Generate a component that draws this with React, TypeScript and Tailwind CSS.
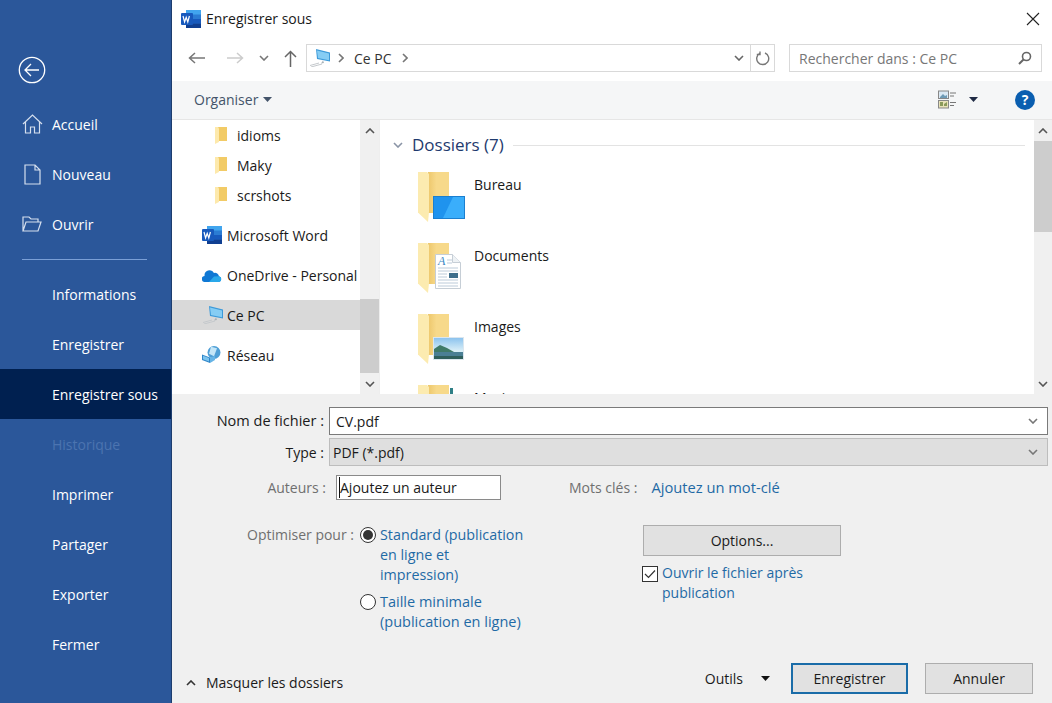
import type { ReactNode } from 'react';

const font = { fontFamily: '"Open Sans", "Noto Sans", sans-serif' };

function WordIcon() {
  return (
    <svg width="20" height="18" viewBox="0 0 20 18" className="shrink-0">
      <rect x="5" y="0" width="15" height="18" rx="1" fill="#2b7cd3" />
      <rect x="5" y="0" width="15" height="4.5" fill="#41a5ee" />
      <rect x="5" y="9" width="15" height="4.5" fill="#185abd" />
      <rect x="5" y="13.5" width="15" height="4.5" fill="#103f91" />
      <rect x="0" y="3" width="12" height="12" rx="1" fill="#185abd" />
      <path d="M2 6l1.600 6 1.600-4.600 1.600 4.600 1.600-6" fill="none" stroke="#fff" strokeWidth="1.2" />
    </svg>
  );
}

function SmallFolder() {
  return (
    <svg width="12" height="17" viewBox="0 0 12 17" className="shrink-0">
      <path d="M3 0h9v14H3z" fill="#f2cb66" />
      <path d="M0 0h3l1 1.500V15l-4 2z" fill="#fde9ac" />
    </svg>
  );
}

function PcIcon() {
  return (
    <svg width="20" height="18" viewBox="0 0 20 18" className="shrink-0">
      <path d="M6 0l14 3.500v9L7 10z" fill="#3d9ad9" />
      <path d="M7 1.400l12 3v6.800L8 9z" fill="#86cdf4" />
      <path d="M13 11.500l1 2.500-3 .5z" fill="#a8b2b9" />
      <path d="M0 16.500l9-2.500M1 18l11-3" stroke="#c4c8cc" strokeWidth="1" />
    </svg>
  );
}

function OneDriveIcon() {
  return (
    <svg width="20" height="13" viewBox="0 0 20 13" className="shrink-0">
      <path d="M3 13a3 3 0 0 1-.4-6A5 5 0 0 1 12 4a4 4 0 0 1 5 3.200 3 3 0 0 1 0 5.800z" fill="#0f78d4" />
      <path d="M7 13l5-5.500 5-.3a3 3 0 0 1 0 5.800z" fill="#29a8ea" />
    </svg>
  );
}

function NetworkIcon() {
  return (
    <svg width="19" height="18" viewBox="0 0 19 18" className="shrink-0">
      <circle cx="12" cy="6.500" r="6.500" fill="#4f9fd6" />
      <path d="M9 .8l6 1.500-3 8-5-2.500z" fill="#c4e6f8" />
      <path d="M0 8.500l8 3v5.500l-8-3z" fill="#2f86c9" />
      <path d="M1 9.800l6 2.300v3.500l-6-2.300z" fill="#7cc4ee" />
      <path d="M8 11.500l5-1.500v4l-5 3z" fill="#66b4e6" />
    </svg>
  );
}

function LargeFolder({ children }: { children?: ReactNode }) {
  return (
    <div className="relative h-[50px] w-[47px] shrink-0">
      <svg width="32" height="50" viewBox="0 0 32 50">
        <defs>
          <linearGradient id="folderBack" x1="0" x2="1" y1="0" y2="0">
            <stop offset="0" stopColor="#edc76b" />
            <stop offset="0.4" stopColor="#f7d98a" />
          </linearGradient>
        </defs>
        <path d="M10 0h21v41H10z" fill="url(#folderBack)" />
        <path d="M0 0h9l2 2v38l-1 10-9-8.500-1-1z" fill="#fcebb0" />
      </svg>
      {children}
    </div>
  );
}

function Chevron({ up, className }: { up?: boolean; className?: string }) {
  return (
    <svg width="10" height="6" viewBox="0 0 10 6" className={className}>
      <path d={up ? 'M1 5l4-4 4 4' : 'M1 1l4 4 4-4'} fill="none" stroke="currentColor" strokeWidth="1.6" />
    </svg>
  );
}

function Caret({ color = '#1f2a44' }: { color?: string }) {
  return (
    <svg width="9" height="5" viewBox="0 0 9 5" className="shrink-0">
      <path d="M0 0h9L4.500 5z" fill={color} />
    </svg>
  );
}

function SideRow({ label, icon, active, muted }: { label: string; icon?: ReactNode; active?: boolean; muted?: boolean }) {
  return (
    <div
      className={`flex h-[50px] items-center text-[14px] ${active ? 'bg-[#002050]' : ''} ${muted ? 'text-[#4c74b0]' : 'text-white'}`}
    >
      <span className="ml-[12px] flex w-[40px] justify-center">{icon}</span>
      {label}
    </div>
  );
}

function TreeRow({ icon, label, iconBox, selected }: { icon: ReactNode; label: string; iconBox: string; selected?: boolean }) {
  return (
    <div className={`flex h-[30px] items-center text-[14px] text-[#1a1a1a] ${selected ? 'bg-[#d9d9d9]' : ''}`}>
      <span className={`flex items-center ${iconBox}`}>{icon}</span>
      <span className="whitespace-nowrap">{label}</span>
    </div>
  );
}

function FolderRow({ label, children }: { label: string; children?: ReactNode }) {
  return (
    <div className="flex h-[71px] shrink-0 pl-[38px]">
      <LargeFolder>{children}</LargeFolder>
      <span className="ml-[9px] mt-[3px] text-[14px] leading-[20px] text-[#1a1a1a]">{label}</span>
    </div>
  );
}

function Scrollbar({ thumbTop, thumbHeight, width }: { thumbTop: string; thumbHeight: string; width: string }) {
  return (
    <div className={`flex shrink-0 flex-col bg-[#f0f0f0] text-[#555] ${width}`}>
      <div className="flex h-[21px] items-center justify-center">
        <Chevron up />
      </div>
      <div className="relative flex-1">
        <div className={`bg-[#cdcdcd] ${thumbTop} ${thumbHeight}`} />
      </div>
      <div className="flex h-[21px] items-center justify-center">
        <Chevron />
      </div>
    </div>
  );
}

function Radio({ checked }: { checked?: boolean }) {
  return (
    <span className="flex h-[16px] w-[16px] shrink-0 items-center justify-center rounded-full border border-[#333] bg-white">
      {checked && <span className="h-[10px] w-[10px] rounded-full bg-[#333]" />}
    </span>
  );
}

export default function App() {
  return (
    <div className="flex h-[703px] w-[1052px] overflow-hidden bg-white" style={font}>
      <aside className="flex w-[172px] shrink-0 flex-col border-r border-[#1d3d6e] bg-[#2b579a]">
        <div className="flex h-[99px] items-start pl-[18px] pt-[56px]">
          <svg width="28" height="28" viewBox="0 0 28 28">
            <circle cx="14" cy="14" r="12.700" fill="none" stroke="#fff" strokeWidth="1.3" />
            <path d="M21 14H7.500M13 8l-6 6 6 6" fill="none" stroke="#fff" strokeWidth="1.3" />
          </svg>
        </div>
        <SideRow
          label="Accueil"
          icon={
            <svg width="21" height="20" viewBox="0 0 21 20">
              <path d="M1 10L10.500 1 20 10M3.500 8v11h5v-6h4v6h5V8" fill="none" stroke="#d5dfee" strokeWidth="1.2" />
            </svg>
          }
        />
        <SideRow
          label="Nouveau"
          icon={
            <svg width="17" height="21" viewBox="0 0 17 21">
              <path d="M1 1h10l5 5v14H1zM11 1v5h5" fill="none" stroke="#d5dfee" strokeWidth="1.2" />
            </svg>
          }
        />
        <SideRow
          label="Ouvrir"
          icon={
            <svg width="20" height="16" viewBox="0 0 20 16">
              <path d="M1 15V1h6l2 2h7v3M1 15l3-9h15l-3 9z" fill="none" stroke="#d5dfee" strokeWidth="1.2" />
            </svg>
          }
        />
        <div className="ml-[22px] mt-[10px] h-px w-[125px] shrink-0 bg-[#7a9fd6]" />
        <div className="flex-1 pt-[9px]">
          <SideRow label="Informations" />
          <SideRow label="Enregistrer" />
          <SideRow label="Enregistrer sous" active />
          <SideRow label="Historique" muted />
          <SideRow label="Imprimer" />
          <SideRow label="Partager" />
          <SideRow label="Exporter" />
          <SideRow label="Fermer" />
        </div>
      </aside>

      <main className="flex min-w-0 flex-1 flex-col">
        <div className="flex h-[37px] shrink-0 items-center pl-[9px] pr-[12px]">
          <WordIcon />
          <span className="ml-[5px] text-[14px] text-[#1a1a1a]">Enregistrer sous</span>
          <svg width="14" height="14" viewBox="0 0 14 14" className="ml-auto">
            <path d="M1 1l12 12M13 1L1 13" stroke="#222" strokeWidth="1.1" />
          </svg>
        </div>

        <div className="flex h-[44px] shrink-0 items-center pb-[2px] pl-[16px] pr-[10px]">
          <svg width="17" height="12" viewBox="0 0 17 12">
            <path d="M17 6H2M7 1L1.500 6 7 11" fill="none" stroke="#777" strokeWidth="1.5" />
          </svg>
          <svg width="17" height="12" viewBox="0 0 17 12" className="ml-[22px]">
            <path d="M0 6h15M10 1l5.500 5L10 11" fill="none" stroke="#ccc" strokeWidth="1.5" />
          </svg>
          <Chevron className="ml-[15px] text-[#777]" />
          <svg width="13" height="17" viewBox="0 0 13 17" className="ml-[15px]">
            <path d="M6.500 17V2M1 7l5.500-5.500L12 7" fill="none" stroke="#666" strokeWidth="1.5" />
          </svg>
          <div className="ml-[9px] flex h-[28px] w-[469px] items-center border border-[#d9d9d9] pl-[3px] text-[14px] text-[#333]">
            <PcIcon />
            <Chevron className="ml-[6px] -rotate-90 text-[#777]" />
            <span className="ml-[8px]">Ce PC</span>
            <Chevron className="ml-[8px] -rotate-90 text-[#777]" />
            <span className="ml-auto flex h-full items-center border-r border-[#d9d9d9] pr-[6px] text-[#666]">
              <Chevron />
            </span>
            <span className="flex w-[23px] justify-center">
              <svg width="15" height="15" viewBox="0 0 15 15">
                <path d="M5 2.200a6 6 0 1 0 5-.2M5 .5v3H1.800" fill="none" stroke="#777" strokeWidth="1.4" />
              </svg>
            </span>
          </div>
          <div className="ml-[14px] flex h-[28px] flex-1 items-center border border-[#d9d9d9] px-[9px] text-[14px] text-[#777]">
            Rechercher dans : Ce PC
            <svg width="14" height="14" viewBox="0 0 14 14" className="ml-auto">
              <circle cx="8.500" cy="5.500" r="4" fill="none" stroke="#666" strokeWidth="1.6" />
              <path d="M5.500 8.500L1 13" stroke="#666" strokeWidth="2" />
            </svg>
          </div>
        </div>

        <div className="flex h-[39px] shrink-0 items-center border-b border-[#e6e6e6] bg-[#f5f6f7] pb-[1px] pl-[22px] pr-[17px]">
          <span className="text-[14px] text-[#44546a]">Organiser</span>
          <span className="ml-[5px]">
            <Caret color="#44546a" />
          </span>
          <svg width="19" height="19" viewBox="0 0 19 19" className="ml-auto">
            <rect x=".5" y="1" width="10" height="7.500" fill="#dbe9f4" stroke="#888" />
            <path d="M2 7l3-3 2 2 2-1v3H2z" fill="#6e9ab5" />
            <rect x=".5" y="10.500" width="10" height="7.500" fill="#e8e2b8" stroke="#888" />
            <path d="M2 12h3v4H2zM6 14l3-2v4H6z" fill="#8a9a5a" />
            <path d="M12 3h6M12 6h4M12 12.500h6M12 15.500h4" stroke="#777" />
          </svg>
          <span className="ml-[12px]">
            <Caret />
          </span>
          <span className="ml-[37px] flex h-[20px] w-[20px] items-center justify-center rounded-full bg-[#0a5eb0] text-[14px] font-bold leading-none text-white">
            ?
          </span>
        </div>

        <div className="flex h-[274px] shrink-0 overflow-hidden">
          <div className="w-[188px] shrink-0 overflow-hidden">
            <TreeRow icon={<SmallFolder />} label="idioms" iconBox="w-[65px] pl-[43px]" />
            <TreeRow icon={<SmallFolder />} label="Maky" iconBox="w-[65px] pl-[43px]" />
            <TreeRow icon={<SmallFolder />} label="scrshots" iconBox="w-[65px] pl-[43px]" />
            <div className="h-[10px]" />
            <TreeRow icon={<WordIcon />} label="Microsoft Word" iconBox="w-[55px] pl-[30px]" />
            <div className="h-[10px]" />
            <TreeRow icon={<OneDriveIcon />} label="OneDrive - Personal" iconBox="w-[55px] pl-[30px]" />
            <div className="h-[10px]" />
            <TreeRow icon={<PcIcon />} label="Ce PC" iconBox="w-[55px] pl-[31px]" selected />
            <div className="h-[10px]" />
            <TreeRow icon={<NetworkIcon />} label="Réseau" iconBox="w-[55px] pl-[30px]" />
          </div>
          <Scrollbar width="w-[19px]" thumbTop="mt-[158px]" thumbHeight="h-[74px]" />
          <div className="min-w-0 flex-1 overflow-hidden border-l border-[#eeeeee]">
            <div className="flex h-[52px] items-center pb-[2px] pl-[13px] pr-[9px]">
              <Chevron className="text-[#8a94a6]" />
              <span className="ml-[9px] text-[17px] text-[#1e3a6e]">Dossiers (7)</span>
              <span className="ml-[9px] h-px flex-1 bg-[#e3e3e3]" />
            </div>
            <FolderRow label="Bureau">
              <svg width="32" height="23" viewBox="0 0 32 23" className="absolute left-[15px] top-[24px]">
                <rect width="32" height="23" fill="#1b7fd0" />
                <rect x="1" y="1" width="30" height="21" fill="#1f93ee" />
                <path d="M20 1h11v21H10z" fill="#3aaefb" />
              </svg>
            </FolderRow>
            <FolderRow label="Documents">
              <svg width="26" height="35" viewBox="0 0 26 35" className="absolute left-[17px] top-[11px]">
                <path d="M.5.5h17l8 8v26H.5z" fill="#fff" stroke="#c6ced6" />
                <path d="M17.500.5v8h8" fill="#eef2f5" stroke="#c6ced6" />
                <text x="3" y="11" fontFamily='"Liberation Serif", serif' fontStyle="italic" fontSize="12" fill="#3b87c4">
                  A
                </text>
                <path d="M12 6h5M12 9h5M3 14h20M3 17h20M3 20h9M3 23h9M3 26h20M3 29h20M3 32h20" stroke="#bccbd9" />
                <rect x="14" y="19" width="9" height="5" fill="#3f6f8c" />
              </svg>
            </FolderRow>
            <FolderRow label="Images">
              <svg width="31" height="23" viewBox="0 0 31 23" className="absolute left-[15px] top-[23px]">
                <defs>
                  <linearGradient id="imageSky" x1="0" x2="0" y1="0" y2="1">
                    <stop offset="0" stopColor="#8cc3ee" />
                    <stop offset="0.6" stopColor="#d8eef7" />
                  </linearGradient>
                </defs>
                <rect width="31" height="23" fill="#dbe6ee" />
                <rect x="1" y="1" width="29" height="21" fill="url(#imageSky)" />
                <path d="M1 12l6-4 7 3 7 4H1z" fill="#3f7a68" />
                <path d="M1 15h29v7H1z" fill="#4a7f94" />
                <path d="M1 19h29v3H1z" fill="#2f5f5c" />
              </svg>
            </FolderRow>
            <FolderRow label="Musique">
              <span className="absolute left-[32px] top-[3px] h-[6px] w-[3px] bg-[#2f7f86]" />
            </FolderRow>
          </div>
          <Scrollbar width="w-[18px]" thumbTop="mt-0" thumbHeight="h-[91px]" />
        </div>

        <div className="flex min-h-0 flex-1 flex-col bg-[#f0f0f0] pt-[13px] text-[14px]">
          <div className="flex h-[28px] items-center pr-[4px]">
            <span className="w-[157px] shrink-0 pr-[5px] text-right text-[14.5px] text-[#1a1a1a]">Nom de fichier :</span>
            <div className="flex h-full flex-1 items-center justify-between border border-[#7a7a7a] bg-white pl-[6px] pr-[9px] text-[#1a1a1a]">
              CV.pdf
              <Chevron className="text-[#777]" />
            </div>
          </div>
          <div className="mt-[3px] flex h-[28px] items-center pr-[4px]">
            <span className="w-[157px] shrink-0 pr-[5px] text-right text-[#1a1a1a]">Type :</span>
            <div className="flex h-full flex-1 items-center justify-between border border-[#bdbdbd] bg-[#dfdfdf] pl-[3px] pr-[9px] text-[#1a1a1a]">
              PDF (*.pdf)
              <Chevron className="text-[#777]" />
            </div>
          </div>

          <div className="mt-[9px] flex h-[25px] items-center">
            <span className="w-[154px] shrink-0 text-right text-[#6f6f6f]">Auteurs :</span>
            <div className="ml-[10px] flex h-full w-[165px] items-center border border-[#8a8a8a] bg-white pl-[2px] text-[#1a1a1a]">
              <span className="border-l border-[#111]">Ajoutez un auteur</span>
            </div>
            <span className="ml-[68px] text-[#6f6f6f]">Mots clés :</span>
            <span className="ml-[14px] text-[14.7px] text-[#1f6aa5]">Ajoutez un mot-clé</span>
          </div>

          <div className="mt-[25px] flex">
            <div className="flex w-[471px] shrink-0">
              <span className="w-[182px] shrink-0 text-right leading-[20px] text-[#6f6f6f]">Optimiser pour :</span>
              <div className="ml-[6px] flex flex-col">
                <div className="flex">
                  <span className="mt-[2px]">
                    <Radio checked />
                  </span>
                  <span className="ml-[4px] w-[150px] text-[14.3px] leading-[20px] text-[#1f6aa5]">Standard (publication en ligne et impression)</span>
                </div>
                <div className="mt-[7px] flex">
                  <span className="mt-[2px]">
                    <Radio />
                  </span>
                  <span className="ml-[4px] w-[150px] text-[14.5px] leading-[20px] text-[#1f6aa5]">Taille minimale (publication en ligne)</span>
                </div>
              </div>
            </div>
            <div className="flex flex-col">
              <button className="flex h-[31px] w-[198px] items-center justify-center border border-[#adadad] bg-[#e1e1e1] text-[#1a1a1a]">
                Options...
              </button>
              <div className="mt-[10px] flex">
                <span className="-ml-[1px] flex h-[16px] w-[16px] shrink-0 items-center justify-center border border-[#333] bg-white">
                  <svg width="12" height="10" viewBox="0 0 12 10">
                    <path d="M1 5l3.500 3.500L11 1.500" fill="none" stroke="#333" strokeWidth="1.2" />
                  </svg>
                </span>
                <span className="-mt-[3px] ml-[4px] w-[160px] leading-[20px] text-[#1f6aa5]">Ouvrir le fichier après publication</span>
              </div>
            </div>
          </div>

          <div className="mb-[9px] mt-auto flex h-[31px] items-center pl-[14px] pr-[19px]">
            <Chevron up className="mt-[8px] text-[#333]" />
            <span className="ml-[10px] mt-[8px] text-[#1a1a1a]">Masquer les dossiers</span>
            <span className="ml-auto text-[#1a1a1a]">Outils</span>
            <span className="ml-[18px]">
              <Caret color="#111" />
            </span>
            <button className="ml-[21px] h-[31px] w-[117px] border-2 border-[#1a6ca8] bg-[#e1e1e1] text-[#1a1a1a]">Enregistrer</button>
            <button className="ml-[17px] h-[31px] w-[108px] border border-[#adadad] bg-[#e1e1e1] text-[#1a1a1a]">Annuler</button>
          </div>
        </div>
      </main>
    </div>
  );
}
